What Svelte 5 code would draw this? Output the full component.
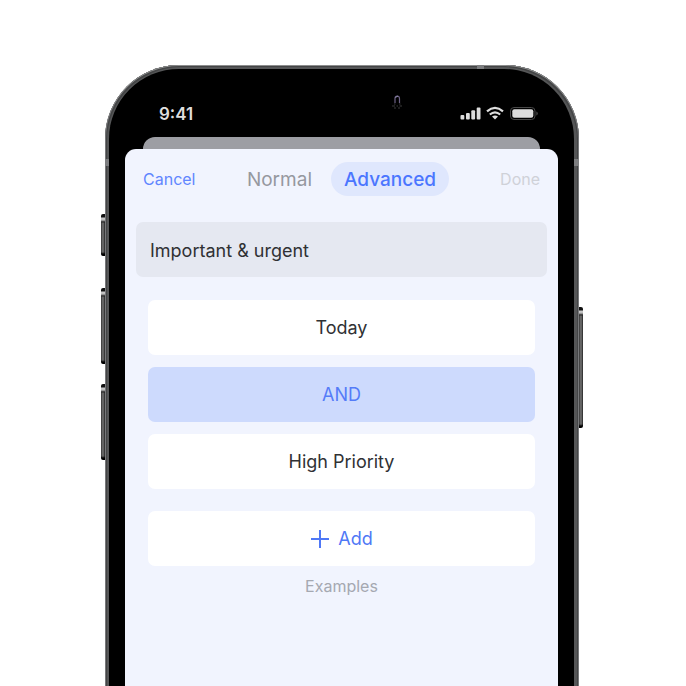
<script>
  let name = $state('Important & urgent');
  let mode = $state('Advanced');
  const rules = [
    { label: 'Today', kind: 'condition' },
    { label: 'AND', kind: 'operator' },
    { label: 'High Priority', kind: 'condition' }
  ];
</script>

<main class="stage">
  <div class="phone">
    <span class="key mute"></span>
    <span class="key up"></span>
    <span class="key down"></span>
    <span class="key power"></span>
    <span class="band left"></span>
    <span class="band right"></span>
    <span class="band top"></span>
    <div class="screen">
      <svg class="camera" width="14" height="18" viewBox="0 0 14 18" fill="none" aria-hidden="true">
        <path d="M5 10V5.500Q5 3 7.200 3T9.500 5.500V10" stroke="#6d6285" stroke-width="1.200" />
        <path d="M5.500 4.500L8 3" stroke="#aaa6cc" stroke-width=".8" />
        <path d="M2 13H5M6.500 13H8M9.500 13H12M4 15H6M8 15H10M4 11H5.500M9 11H10.500" stroke="#3c3c3c" stroke-width="1" />
      </svg>
      <div class="status">
        <time>9:41</time>
        <svg width="78" height="16" viewBox="0 0 78 16" aria-hidden="true">
          <g fill="#dedede">
            <rect x="0.500" y="9" width="3.800" height="4.500" rx="1" />
            <rect x="6" y="7" width="3.800" height="6.500" rx="1" />
            <rect x="11.300" y="4.300" width="3.800" height="9.200" rx="1" />
            <rect x="16.700" y="1.500" width="3.800" height="12" rx="1" />
            <path d="M35 13.500L32 10.600Q35 8.300 38 10.600Z" />
          </g>
          <g fill="none" stroke="#dedede" stroke-width="2.200">
            <path d="M27 5.300Q35 -1.500 43 5.300" />
            <path d="M29.800 8.500Q35 4.100 40.200 8.500" />
          </g>
          <rect x="50.500" y="1.500" width="24.500" height="12" rx="3.500" fill="none" stroke="#484848" />
          <rect x="52.300" y="3.300" width="21" height="8.500" rx="2" fill="#dedede" />
          <path d="M76.300 5.500V9.500Q77.800 8.900 77.800 7.500T76.300 5.500Z" fill="#484848" />
        </svg>
      </div>
      <div class="behind"></div>
      <section class="sheet">
        <header>
          <button class="text cancel">Cancel</button>
          <nav>
            {#each ['Normal', 'Advanced'] as tab}
              <button class="tab" class:active={mode === tab} onclick={() => (mode = tab)}>{tab}</button>
            {/each}
          </nav>
          <button class="text done" disabled>Done</button>
        </header>
        <input class="name" aria-label="Filter name" bind:value={name} />
        <div class="rules">
          {#each rules as rule}
            <button class="rule {rule.kind}">{rule.label}</button>
          {/each}
        </div>
        <button class="rule add">
          <svg width="20" height="20" viewBox="0 0 20 20" aria-hidden="true">
            <path d="M10 1V19M1 10H19" stroke="currentColor" stroke-width="2" />
          </svg>
          Add
        </button>
        <a class="examples" href="#examples">Examples</a>
      </section>
    </div>
  </div>
</main>

<style>
  :global(body) {
    margin: 0;
    background: #fff;
  }
  .stage,
  .stage * {
    box-sizing: border-box;
  }
  .stage {
    display: flex;
    min-height: 100vh;
    padding: 65px 107px 0 105px;
    font-family: Inter, 'Liberation Sans', sans-serif;
  }
  button,
  input {
    margin: 0;
    padding: 0;
    border: 0;
    background: none;
    font: inherit;
    color: inherit;
  }
  .phone {
    position: relative;
    display: flex;
    flex: 1;
    min-width: 0;
    padding: 4px 5px 0 4px;
    border-radius: 74px 74px 0 0;
    background: #555657;
    box-shadow:
      inset 0 1px 0 #8d8e8e,
      inset 1px 0 0 #77787a,
      inset -1px 0 0 #77787a,
      inset 2px 2px 0 #444546,
      inset -2px 2px 0 #444546;
  }
  .screen {
    position: relative;
    display: flex;
    flex: 1;
    flex-direction: column;
    min-width: 0;
    padding: 0 16px;
    border-radius: 70px 70px 0 0;
    background: #000;
  }
  .key {
    position: absolute;
    left: -4px;
    width: 4px;
    border-radius: 2px 0 0 2px;
    background: linear-gradient(#111 3px, #ccc 4px, #bbb 6px, #222 8px, transparent 9px, transparent calc(100% - 4px), #000 calc(100% - 2px)),
      linear-gradient(90deg, #333, #777 50%, #222);
  }
  .mute {
    top: 149px;
    height: 42px;
  }
  .up {
    top: 223px;
    height: 76px;
  }
  .down {
    top: 319px;
    height: 76px;
  }
  .power {
    top: 242px;
    right: -4px;
    left: auto;
    height: 121px;
    border-radius: 0 2px 2px 0;
  }
  .band {
    position: absolute;
    background: #7d7e80;
  }
  .band.left,
  .band.right {
    top: 94px;
    width: 5px;
    height: 7px;
  }
  .band.left {
    left: 0;
  }
  .band.right {
    right: 0;
  }
  .band.top {
    top: 0;
    right: 95px;
    width: 7px;
    height: 4px;
  }
  .camera {
    position: absolute;
    top: 24px;
    right: 170px;
  }
  .status {
    display: flex;
    justify-content: space-between;
    align-items: center;
    height: 68px;
    padding: 22px 20px 0 34px;
    color: #dedede;
    font-size: 17px;
    font-weight: 600;
    line-height: 20px;
  }
  .behind {
    height: 12px;
    margin: 0 18px;
    border-radius: 12px 12px 0 0;
    background: #9d9ea4;
  }
  .sheet {
    display: flex;
    flex: 1;
    flex-direction: column;
    padding: 13px 11px 0;
    border-radius: 11px 11px 0 0;
    background: #f1f4fe;
  }
  header {
    display: grid;
    grid-template-columns: 1fr auto 1fr;
    align-items: center;
    padding: 0 7px;
  }
  nav {
    display: flex;
    gap: 6px;
  }
  .text {
    font-size: 16px;
    line-height: 20px;
  }
  .cancel {
    justify-self: start;
    color: #6186ff;
  }
  .done {
    justify-self: end;
    color: #cfd1d8;
  }
  .tab {
    height: 34px;
    padding: 1px 13px 0;
    border-radius: 17px;
    color: #96989f;
    font-size: 19px;
    line-height: 33px;
  }
  .tab.active {
    background: #dfe7fd;
    color: #4b76ff;
    font-weight: 500;
  }
  .name {
    width: 100%;
    height: 55px;
    margin-top: 26px;
    padding: 1px 14px 0;
    border-radius: 7px;
    background: #e5e8f1;
    color: #303134;
    font-size: 18px;
  }
  .rules {
    display: flex;
    flex-direction: column;
    gap: 12px;
    margin: 23px 12px 22px;
  }
  .rule {
    height: 55px;
    border-radius: 7px;
    background: #fff;
    color: #303134;
    font-size: 18px;
    text-align: center;
  }
  .rule.operator {
    background: #cddafd;
    color: #557cf8;
  }
  .rule.add {
    display: flex;
    justify-content: center;
    align-items: center;
    gap: 8px;
    margin: 0 12px;
    color: #4f78f6;
  }
  .examples {
    align-self: center;
    margin-top: 10px;
    color: #a5a8b1;
    font-size: 16px;
    line-height: 20px;
    text-decoration: none;
  }
</style>
